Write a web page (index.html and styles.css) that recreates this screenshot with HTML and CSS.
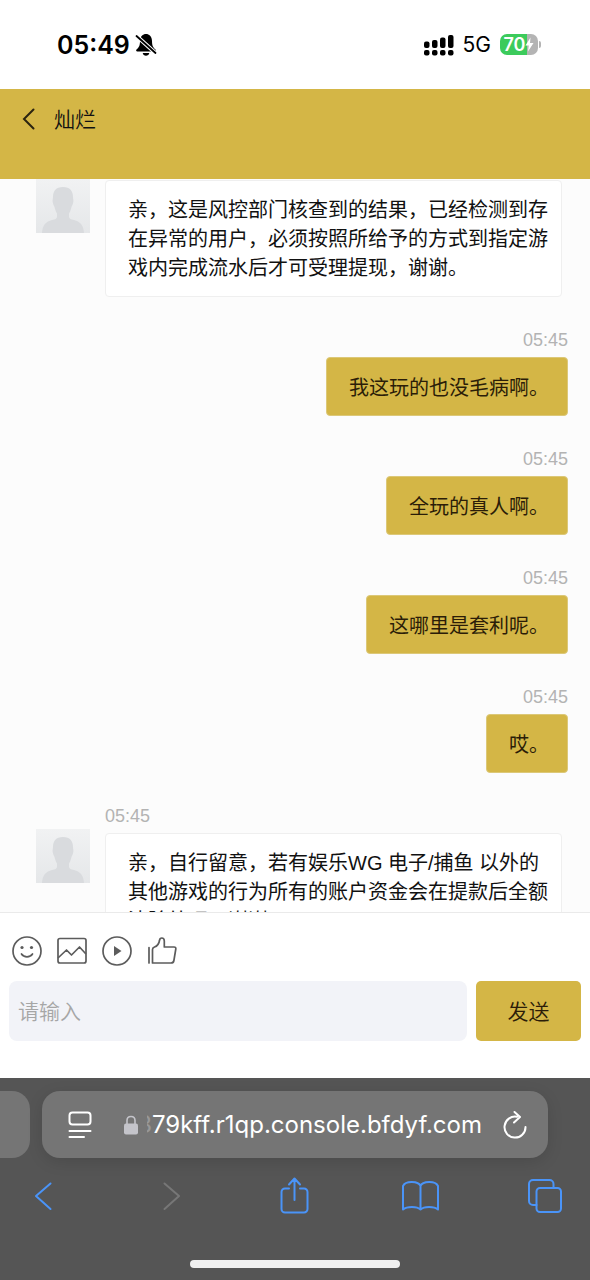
FILE: index.html
```html
<!DOCTYPE html>
<html lang="zh-CN">
<head>
<meta charset="utf-8">
<meta name="viewport" content="width=device-width, initial-scale=1">
<title>灿烂</title>
<link rel="stylesheet" href="styles.css">
</head>
<body>
<svg class="sprite" width="0" height="0" aria-hidden="true">
  <defs>
    <linearGradient id="avatar-bg" x1="0" y1="0" x2="0" y2="1">
      <stop offset="0" stop-color="#f1f2f3"/>
      <stop offset="1" stop-color="#e5e7e9"/>
    </linearGradient>
    <symbol id="avatar" viewBox="0 0 54 54">
      <rect width="54" height="54" fill="url(#avatar-bg)"/>
      <path d="M27 8c-7 0-10 4-10 10 0 2-.7 3-.3 5 .4 2.500 1.300 3.500 1.800 5 .7 3 1.500 5 2.500 6.500V38c0 1.500-2 2.500-5 3C10 42.500 6.500 46 6 54h42c-.5-8-4-11.500-10-13-3-.5-5-1.500-5-3v-3.500c1-1.500 1.800-3.500 2.500-6.500.5-1.500 1.400-2.500 1.800-5 .4-2-.3-3-.3-5 0-6-3-10-10-10z" fill="#d9dbde"/>
    </symbol>
  </defs>
</svg>

<div class="status">
  <div class="status-left">
    <time class="clock">05:49</time>
    <svg width="22" height="24" viewBox="0 0 22 24" aria-label="静音">
      <path d="M11 1C8 1 5 3.500 5 8c0 4.500-1 6.500-3.500 8.500-.8.8-.3 2 .8 2h17.400c1.100 0 1.600-1.200.8-2C18 14.500 17 12.500 17 8c0-4.500-3-7-6-7zM7.700 20h6.600c-.3 1.700-1.700 2.700-3.300 2.700S8 21.700 7.700 20z"/>
      <path d="M1 2.500 21 20.500" stroke="#fff" stroke-width="4"/>
      <path d="M1.500 3 20.500 20" stroke="#000" stroke-width="1.800" stroke-linecap="round"/>
    </svg>
  </div>
  <div class="status-right">
    <svg width="30" height="22" viewBox="0 0 30 22" aria-label="信号">
      <rect x="0" y="7.500" width="5.500" height="6.500" rx="2"/><rect x="8" y="6" width="5.500" height="8" rx="2"/><rect x="16" y="3.500" width="5.500" height="10.500" rx="2"/><rect x="24" y="1" width="5.500" height="13" rx="2"/>
      <rect x="0" y="16" width="5.500" height="5.500" rx="2"/><rect x="8" y="16" width="5.500" height="5.500" rx="2"/><rect x="16" y="16" width="5.500" height="5.500" rx="2"/><rect x="24" y="16" width="5.500" height="5.500" rx="2"/>
    </svg>
    <span class="network">5G</span>
    <div class="battery">
      <span>70</span>
      <svg width="9" height="15" viewBox="0 0 9 15" aria-hidden="true"><path d="M5.500.5.500 8.500h3.300L3 14.500l5.500-8.500H5z" fill="#fff"/></svg>
    </div>
  </div>
</div>

<header class="header">
  <button class="back" type="button" aria-label="返回">
    <svg width="14" height="22" viewBox="0 0 14 22"><path d="M11.500 1.500 2 11 11.500 20.500"/></svg>
  </button>
  <h1 class="title">灿烂</h1>
</header>

<main class="chat">
  <article class="message message-in message-first">
    <svg class="avatar" role="img" aria-label="头像"><use href="#avatar"/></svg>
    <div class="message-body">
      <p class="bubble">亲，这是风控部门核查到的结果，已经检测到存在异常的用户，必须按照所给予的方式到指定游戏内完成流水后才可受理提现，谢谢。</p>
    </div>
  </article>
  <article class="message message-out">
    <time class="stamp">05:45</time>
    <p class="bubble">我这玩的也没毛病啊。</p>
  </article>
  <article class="message message-out">
    <time class="stamp">05:45</time>
    <p class="bubble">全玩的真人啊。</p>
  </article>
  <article class="message message-out">
    <time class="stamp">05:45</time>
    <p class="bubble">这哪里是套利呢。</p>
  </article>
  <article class="message message-out">
    <time class="stamp">05:45</time>
    <p class="bubble">哎。</p>
  </article>
  <article class="message message-in">
    <svg class="avatar" role="img" aria-label="头像"><use href="#avatar"/></svg>
    <div class="message-body">
      <time class="stamp">05:45</time>
      <p class="bubble">亲，自行留意，若有娱乐WG 电子/捕鱼 以外的其他游戏的行为所有的账户资金会在提款后全额清除处理，谢谢。</p>
    </div>
  </article>
</main>

<form class="composer">
  <div class="tools">
    <button type="button" aria-label="表情">
      <svg viewBox="0 0 30 30"><circle cx="15" cy="15" r="14"/><circle class="solid" cx="10" cy="11.500" r="1.600"/><circle class="solid" cx="19.500" cy="11.500" r="1.600"/><path d="M9.500 18c2.500 3.700 8.500 3.700 11 0"/></svg>
    </button>
    <button type="button" aria-label="图片">
      <svg viewBox="0 0 30 30"><rect x="1" y="2.500" width="28" height="24.500" rx="2"/><path d="m1.500 21.500 8-7.500 5 5 8-8 6 6.500"/></svg>
    </button>
    <button type="button" aria-label="视频">
      <svg viewBox="0 0 30 30"><circle cx="15" cy="15" r="14"/><path class="solid" d="M12 10v10l7.500-5z"/></svg>
    </button>
    <button type="button" aria-label="点赞">
      <svg viewBox="0 0 30 30"><path d="M2 11.500V27M5.500 27V13.500c0-1.500.8-2 2-2.500 3.500-1 4.500-3.500 5-6.500.2-1.700 1-2.500 2.300-2.500 1.700 0 2.500 1 2.500 3v6H27c1.500 0 2 .8 1.800 2l-1.900 11.500c-.3 1.800-1.200 2.500-2.900 2.500z"/></svg>
    </button>
  </div>
  <div class="entry">
    <input class="text-box" type="text" placeholder="请输入" aria-label="请输入">
    <button class="send" type="submit">发送</button>
  </div>
</form>

<footer class="browser">
  <div class="tabs">
    <div class="tab-previous"></div>
    <div class="address">
      <button class="page-menu" type="button" aria-label="页面设置">
        <svg width="24" height="28" viewBox="0 0 24 28"><rect x="1.500" y="1.500" width="21" height="12" rx="3"/><path d="M1.500 20h21M1.500 26h14.500"/></svg>
      </button>
      <div class="location">
        <svg width="16" height="20" viewBox="0 0 16 20" aria-label="安全连接"><rect x="1" y="8.500" width="14" height="11" rx="2" fill="#c4c4ca"/><path d="M4 9V5.500c0-5.300 8-5.300 8 0V9" fill="none" stroke="#c4c4ca" stroke-width="1.600"/></svg>
        <span class="url"><span class="url-fade">3</span>79kff.r1qp.console.bfdyf.com</span>
      </div>
      <button type="button" aria-label="重新载入">
        <svg width="24" height="28" viewBox="0 0 24 28"><path d="M14 5.800a10.500 10.500 0 1 0 8.500 10.200M11.500 1l5.500 5-6 5.500"/></svg>
      </button>
    </div>
  </div>
  <nav class="nav">
    <button type="button" aria-label="后退"><svg viewBox="0 0 40 40"><path d="M27.500 7.500 13 20l14.500 13"/></svg></button>
    <button type="button" aria-label="前进" disabled><svg viewBox="0 0 40 40"><path d="M15.500 7.500 30 20 15.500 33"/></svg></button>
    <button type="button" aria-label="分享"><svg viewBox="0 0 40 40"><path d="M15 12.500h-4a3.500 3.500 0 0 0-3.500 3.500v17a3.500 3.500 0 0 0 3.500 3.500h19a3.500 3.500 0 0 0 3.500-3.500V16a3.500 3.500 0 0 0-3.500-3.500h-4M20.500 24V3M15 8.500l5.500-6 5.500 6"/></svg></button>
    <button type="button" aria-label="书签"><svg viewBox="0 0 40 40"><path d="M20.500 10c-2-5-15-5.500-17.500 0v23.500c4-3.500 14-3.500 17.500 0 3.500-3.500 13.500-3.500 17.500 0V10c-2.500-5.500-15.500-5-17.500 0zM20.500 10v23.500"/></svg></button>
    <button type="button" aria-label="标签页"><svg viewBox="0 0 40 40"><rect x="11.500" y="12" width="24.500" height="24" rx="3.500"/><path d="M11.500 29H8a4 4 0 0 1-4-4V8a4 4 0 0 1 4-4h16.500a4 4 0 0 1 4 4v4"/></svg></button>
  </nav>
  <div class="home-indicator"></div>
</footer>
</body>
</html>
```
FILE: styles.css
```css
* {
  box-sizing: border-box;
}

:root {
  --gold: #d4b646;
  --ink: #111;
  --blue: #4a94f8;
}

body {
  margin: 0;
  height: 100vh;
  display: flex;
  flex-direction: column;
  background: #fff;
  color: var(--ink);
  font-family: Inter, "Noto Sans CJK SC", sans-serif;
}

button {
  display: block;
  border: 0;
  padding: 0;
  background: none;
  color: inherit;
  font: inherit;
}

svg {
  display: block;
  flex: none;
}

.sprite {
  position: absolute;
}

/* Status bar */
.status {
  flex: none;
  height: 89px;
  padding: 0 52px 0 57px;
  display: flex;
  align-items: center;
  justify-content: space-between;
  color: #000;
}

.status-left {
  display: flex;
  align-items: center;
  gap: 5px;
}

.clock {
  font-size: 25px;
  font-weight: 600;
}

.status-right {
  display: flex;
  align-items: center;
  gap: 9px;
}

.network {
  font-size: 21px;
}

.battery {
  position: relative;
  width: 38px;
  height: 21px;
  border-radius: 7px;
  display: flex;
  align-items: center;
  justify-content: center;
  background: linear-gradient(90deg, #3ccb5c 70%, #b4b4b4 70%);
  color: #fff;
  font-size: 18px;
  font-weight: 600;
}

.battery::after {
  content: "";
  position: absolute;
  right: -3px;
  top: 7px;
  width: 2px;
  height: 7px;
  border-radius: 0 2px 2px 0;
  background: #b4b4b4;
}

/* Page header */
.header {
  flex: none;
  height: 90px;
  padding: 15px 22px;
  display: flex;
  align-items: flex-start;
  gap: 18px;
  background: var(--gold);
}

.back {
  height: 30px;
}

.back path {
  fill: none;
  stroke: #2b2410;
  stroke-width: 2;
  stroke-linecap: round;
}

.title {
  margin: 0;
  font-size: 21px;
  line-height: 32px;
  font-weight: 350;
}

/* Conversation */
.chat {
  flex: 1;
  min-height: 0;
  overflow: hidden;
  display: flex;
  flex-direction: column;
  gap: 32px;
  background: #fcfcfc;
}

.message {
  flex: none;
  display: flex;
}

.message-in {
  padding: 0 28px 0 36px;
  gap: 15px;
}

.message-out {
  flex-direction: column;
  align-items: flex-end;
  padding: 0 22px;
}

.message-body {
  flex: 1;
}

.avatar {
  width: 54px;
  height: 54px;
  margin-top: 24px;
}

.message-first .avatar {
  margin-top: 0;
}

.message-first .message-body {
  padding-top: 1px;
}

.stamp {
  display: block;
  margin-bottom: 6px;
  color: #b3b3b3;
  font-family: "Liberation Sans", sans-serif;
  font-size: 18px;
  line-height: 22px;
}

.bubble {
  margin: 0;
  padding: 15px 12px 13px 22px;
  border: 1px solid #efefef;
  border-radius: 4px;
  background: #fff;
  font-family: "Liberation Sans", "Noto Sans CJK SC", sans-serif;
  font-size: 20px;
  line-height: 29px;
}

.message-out .bubble {
  padding: 16px 18px 12px 22px;
  border-color: #dcc878;
  background: var(--gold);
  color: #2b1d08;
}

/* Composer */
.composer {
  flex: none;
  padding: 23px 9px 37px;
  border-top: 1px solid #eaeaea;
  display: flex;
  flex-direction: column;
  gap: 15px;
}

.tools {
  display: flex;
  gap: 15px;
  padding: 0 3px;
}

.tools svg {
  width: 30px;
  height: 30px;
  fill: none;
  stroke: #5c5c5c;
  stroke-width: 1.7;
  stroke-linecap: round;
  stroke-linejoin: round;
}

.tools .solid {
  fill: #5c5c5c;
  stroke: none;
}

.entry {
  display: flex;
  gap: 9px;
}

.text-box {
  flex: 1;
  min-width: 0;
  height: 60px;
  padding: 0 9px;
  border: 0;
  border-radius: 8px;
  background: #f2f3f8;
  color: var(--ink);
  font-family: inherit;
  font-size: 21px;
}

.text-box::placeholder {
  color: #a6a6a6;
  font-weight: 350;
}

.send {
  width: 105px;
  height: 60px;
  padding-bottom: 3px;
  border-radius: 5px;
  background: var(--gold);
  color: #2b1d08;
  font-size: 21px;
  font-weight: 350;
}

/* Browser toolbar */
.browser {
  flex: none;
  padding: 13px 0 12px;
  background: #555;
  color: #fff;
}

.tabs {
  display: flex;
  gap: 12px;
  padding-right: 42px;
}

.tab-previous {
  width: 30px;
  border-radius: 0 18px 18px 0;
  background: #757575;
}

.address {
  flex: 1;
  min-width: 0;
  height: 67px;
  padding: 0 21px 0 26px;
  border-radius: 18px;
  display: flex;
  align-items: center;
  justify-content: flex-end;
  gap: 21px;
  background: #757575;
  box-shadow: 0 4px 16px rgba(0, 0, 0, 0.12);
}

.address button path,
.address button rect {
  fill: none;
  stroke: #fff;
  stroke-width: 2;
  stroke-linecap: round;
  stroke-linejoin: round;
}

.page-menu {
  margin-right: auto;
}

.location {
  display: flex;
  align-items: center;
  gap: 8px;
}

.url {
  display: flex;
  font-size: 24px;
}

.url-fade {
  width: 5px;
  display: flex;
  justify-content: flex-end;
  overflow: hidden;
  opacity: 0.25;
}

.nav {
  margin-top: 18px;
  padding: 0 25px 0 23px;
  display: flex;
  justify-content: space-between;
}

.nav svg {
  width: 40px;
  height: 40px;
  fill: none;
  stroke: var(--blue);
  stroke-width: 2;
  stroke-linecap: round;
  stroke-linejoin: round;
}

.nav button:disabled svg {
  stroke: #777;
}

.home-indicator {
  width: 210px;
  height: 8px;
  margin: 44px auto 0;
  border-radius: 4px;
  background: #f0f0f0;
}
```
